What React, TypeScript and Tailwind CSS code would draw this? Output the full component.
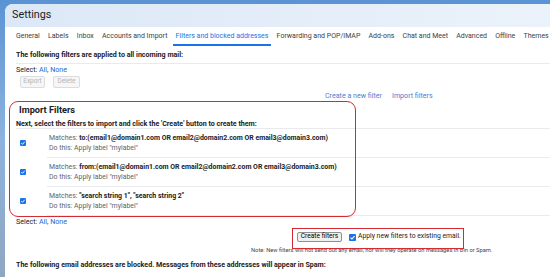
import React from 'react'

const tabs = [
    'General',
    'Labels',
    'Inbox',
    'Accounts and Import',
    'Filters and blocked addresses',
    'Forwarding and POP/IMAP',
    'Add-ons',
    'Chat and Meet',
    'Advanced',
    'Offline',
    'Themes',
]

const filters = [
    'to:(email1@domain1.com OR email2@domain2.com OR email3@domain3.com)',
    'from:(email1@domain1.com OR email2@domain2.com OR email3@domain3.com)',
    '"search string 1", "search string 2"',
]

function CheckBox({ big }: { big?: boolean }) {
    return (
        <span
            className={
                big
                    ? 'flex h-[7px] w-[7px] items-center justify-center rounded-[1px] bg-[#1a73e8]'
                    : 'flex h-[6px] w-[6px] items-center justify-center rounded-[1px] bg-[#1a73e8]'
            }
        >
            <svg viewBox="0 0 10 10" className="h-full w-full">
                <path d="M2.2 5.2 L4.2 7.2 L7.9 2.9" fill="none" stroke="white" strokeWidth="1.6" />
            </svg>
        </span>
    )
}

export default function App() {
    return (
        <div className="relative h-[277px] w-[550px] overflow-hidden bg-gradient-to-b from-[#5a93d4] via-[#8db3df] to-[#8fa6c0] pl-[5px] pt-[4px] font-['Roboto',sans-serif] text-[#202124]">
            <div className="h-full w-full overflow-hidden rounded-tl-[8px] bg-white">
                <div className="flex h-[23px] items-center bg-gradient-to-r from-[#dce8f7] to-[#ebf2fa] pl-[7px] text-[10.8px] text-[#202124]">
                    Settings
                </div>
                <div className="flex h-[19px] items-stretch gap-[2.2px] pl-[8px] text-[7px] text-[#3c4043]">
                    {tabs.map((t) => (
                        <div
                            key={t}
                            className={
                                t === 'Filters and blocked addresses'
                                    ? 'flex items-center whitespace-nowrap border-b-2 border-[#1a73e8] px-[3px] pt-[2px] text-[#1a73e8]'
                                    : 'flex items-center whitespace-nowrap border-b-2 border-transparent px-[3px] pt-[2px]'
                            }
                        >
                            {t}
                        </div>
                    ))}
                </div>

                <div className="pl-[11px] text-[7.1px] leading-[9.5px]">
                    <div className="flex h-[18px] items-center border-b border-[#e8eaed] font-bold">
                        The following filters are applied to all incoming mail:
                    </div>
                    <div className="flex h-[12px] items-center">
                        Select:&nbsp;<span className="text-[#2a66d4]">All</span>,&nbsp;
                        <span className="text-[#2a66d4]">None</span>
                    </div>
                    <div className="flex h-[12px] gap-[8px] pl-[4px] text-[6.4px] text-[#b4b4b4]">
                        <span className="flex w-[25px] items-center justify-center rounded-[2px] border border-[#dadce0] bg-[#f6f6f6]">
                            Export
                        </span>
                        <span className="flex w-[27px] items-center justify-center rounded-[2px] border border-[#dadce0] bg-[#f6f6f6]">
                            Delete
                        </span>
                    </div>
                    <div className="flex h-[12px] items-end gap-[10px] pl-[309px] text-[#4f7dcf]">
                        <span>Create a new filter</span>
                        <span>Import filters</span>
                    </div>

                    <div className="flex h-[19px] items-center pl-[3px] text-[9.2px] font-bold">
                        Import Filters
                    </div>
                    <div className="flex h-[10px] items-center border-b border-[#e8eaed] font-bold">
                        Next, select the filters to import and click the 'Create' button to create them:
                    </div>
                    {filters.map((f) => (
                        <div key={f} className="flex">
                            <div className="w-[31px] pl-[4px] pt-[11px]">
                                <CheckBox />
                            </div>
                            <div className="h-[29px] flex-1 border-b border-[#e8eaed] pl-[2px] pt-[5px] text-[6.95px] text-[#5f6368]">
                                <div className="whitespace-nowrap">
                                    Matches: <span className="font-bold text-[#202124]">{f}</span>
                                </div>
                                <div>Do this: Apply label "mylabel"</div>
                            </div>
                        </div>
                    ))}

                    <div className="flex h-[12px] items-center">
                        Select:&nbsp;<span className="text-[#2a66d4]">All</span>,&nbsp;
                        <span className="text-[#2a66d4]">None</span>
                    </div>
                    <div className="flex h-[18px] items-center pl-[281px]">
                        <span className="flex h-[10px] w-[45px] items-center justify-center rounded-[2px] border border-[#8f8f8f] bg-[#efefef] text-[6.6px] text-black">
                            Create filters
                        </span>
                        <span className="ml-[7px] mr-[2px]">
                            <CheckBox big />
                        </span>
                        <span className="text-[6.8px]">Apply new filters to existing email.</span>
                    </div>
                    <div className="flex h-[10px] items-center whitespace-nowrap pl-[235px] text-[5.75px] text-[#444746]">
                        Note: New filters will not send out any email, nor will they operate on messages in Bin or Spam.
                    </div>
                    <div className="flex h-[18px] items-center font-bold">
                        The following email addresses are blocked. Messages from these addresses will appear in Spam:
                    </div>
                </div>
            </div>

            <div className="absolute left-[8.5px] top-[100.5px] h-[116px] w-[347px] rounded-[9px] border-[1.5px] border-[#d42a32]" />
            <div className="absolute left-[292px] top-[228px] h-[20.5px] w-[172px] border-[1.5px] border-[#d42a32]" />
        </div>
    )
}
